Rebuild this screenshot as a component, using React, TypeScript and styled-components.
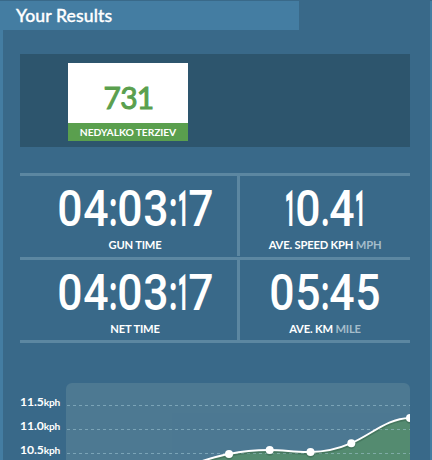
import React from "react";
import styled, { createGlobalStyle } from "styled-components";

const GlobalStyle = createGlobalStyle`
  * {
    box-sizing: border-box;
  }
  body {
    margin: 0;
    background: #396989;
    font-family: Lato, "Open Sans", sans-serif;
    overflow: hidden;
  }
`;

const Page = styled.div`
  height: 460px;
  padding-top: 1px;
  background: #396989;
  overflow: hidden;
`;

const Panel = styled.main`
  height: 459px;
  border-left: 3px solid #447da2;
  border-right: 2px solid #447da2;
  overflow: hidden;
`;

const Title = styled.h1`
  width: 296px;
  height: 29px;
  margin: 0;
  padding-left: 13px;
  background: #447da2;
  color: #fff;
  font-size: 17.6px;
  font-weight: 500;
  line-height: 29px;
  letter-spacing: 0.1px;
  white-space: nowrap;
  -webkit-text-stroke: 0.35px #fff;
`;

const Content = styled.div`
  width: 390px;
  margin: 24px 0 0 17px;
`;

const Runner = styled.section`
  height: 93px;
  padding: 9px 0 0 48px;
  background: #2d556d;
`;

const Bib = styled.div`
  width: 120px;
  background: #fff;
  text-align: center;
`;

const BibNumber = styled.div`
  height: 60px;
  padding-left: 1px;
  color: #5a9f4e;
  font-size: 30px;
  font-weight: 400;
  line-height: 68px;
  letter-spacing: -0.8px;
  -webkit-text-stroke: 1px #5a9f4e;
`;

const BibName = styled.div`
  height: 18px;
  background: #5a9f4e;
  color: #fff;
  font-size: 10.3px;
  font-weight: 700;
  line-height: 19px;
  letter-spacing: -0.1px;
  white-space: nowrap;
`;

const Stats = styled.section`
  display: grid;
  grid-template-columns: 220px 170px;
  grid-template-rows: 84px 83px;
  margin-top: 26px;
  border-bottom: 3px solid #5c87a1;
`;

const StatCell = styled.div<{ $divider?: boolean }>`
  display: grid;
  grid-template-columns: 1fr ${(p) => (p.$divider ? "3px" : "0")};
  border-top: 3px solid #5c87a1;
`;

const Divider = styled.div`
  height: 80px;
  background: #5c87a1;
`;

const StatBody = styled.div<{ $pad?: number }>`
  padding: 14px 0 0 ${(p) => p.$pad || 0}px;
  color: #fff;
  text-align: center;
`;

const Clock = styled.div`
  display: flex;
  justify-content: center;
  height: 36px;
  font-family: Roboto, sans-serif;
  font-size: 50.6px;
  font-weight: 500;
  line-height: 37px;
`;

const Digit = styled.span<{ $width: number; $scale: number; $weight: number }>`
  display: flex;
  justify-content: center;
  width: ${(p) => p.$width}px;
  font-weight: ${(p) => p.$weight};
  transform: scaleX(${(p) => p.$scale});
`;

const StatLabel = styled.div`
  height: 16px;
  margin-top: 11px;
  font-size: 11.2px;
  font-weight: 700;
  line-height: 16px;
  letter-spacing: -0.18px;
  white-space: nowrap;
`;

const Unit = styled.span`
  color: #a5bdcb;
`;

const Chart = styled.section`
  display: flex;
  height: 77px;
  margin-top: 40px;
`;

const Axis = styled.div`
  width: 46px;
  padding-top: 7px;
  color: #fff;
`;

const Tick = styled.div`
  height: 24px;
  font-size: 12.2px;
  font-weight: 700;
  line-height: 24px;
  letter-spacing: -0.1px;
  white-space: nowrap;

  small {
    font-size: 10.2px;
    letter-spacing: -0.2px;
  }
`;

const Plot = styled.svg`
  display: block;
  width: 344px;
  height: 77px;
  border-radius: 6px 6px 0 0;
  background: #4d7992;
`;

type StatProps = {
  value: string;
  label: string;
  unit?: string;
  divider?: boolean;
  pad?: number;
};

// the ones and the punctuation are much narrower than the other digits
const digitStyle = (c: string) => {
  if (c === ":" || c === ".") return { $width: 8.5, $scale: 0.62, $weight: 700 };
  if (c === "1") return { $width: 10, $scale: 0.36, $weight: 900 };
  return { $width: 26, $scale: 0.88, $weight: 500 };
};

const Stat = ({ value, label, unit, divider, pad }: StatProps) => (
  <StatCell $divider={divider}>
    <StatBody $pad={pad}>
      <Clock>
        {value.split("").map((c, i) => (
          <Digit key={i} {...digitStyle(c)}>
            {c}
          </Digit>
        ))}
      </Clock>
      <StatLabel>
        {label}
        {unit && <Unit> {unit}</Unit>}
      </StatLabel>
    </StatBody>
    {divider && <Divider />}
  </StatCell>
);

const ticks = ["11.5", "11.0", "10.5"];

const points = [
  [163, 71],
  [203.7, 67],
  [244.5, 69],
  [285.3, 60.2],
  [344, 35],
];

const curve =
  "M112 85 C130 81 145 74 163 71 C177 68 190 67 203.7 67 C218 67 230 69.5 244.5 69 C259 69 272 66 285.3 60.2 C307 50.5 321 35.5 344 35";

const App = () => (
  <>
    <GlobalStyle />
    <Page>
      <Panel>
        <Title>Your Results</Title>
        <Content>
          <Runner>
            <Bib>
              <BibNumber>731</BibNumber>
              <BibName>NEDYALKO TERZIEV</BibName>
            </Bib>
          </Runner>
          <Stats>
            <Stat value="04:03:17" label="GUN TIME" divider pad={13} />
            <Stat value="10.41" label="AVE. SPEED KPH" unit="MPH" />
            <Stat value="04:03:17" label="NET TIME" divider pad={13} />
            <Stat value="05:45" label="AVE. KM" unit="MILE" />
          </Stats>
          <Chart>
            <Axis>
              {ticks.map((t) => (
                <Tick key={t}>
                  {t}
                  <small>kph</small>
                </Tick>
              ))}
            </Axis>
            <Plot viewBox="0 0 344 77">
              <path d={`${curve} V77 H112 Z`} fill="#548b70" />
              {[22.5, 46.5, 70.5].map((y) => (
                <line
                  key={y}
                  x1="1"
                  x2="344"
                  y1={y}
                  y2={y}
                  stroke="#a9d0dc"
                  strokeOpacity="0.5"
                  strokeDasharray="3 3"
                />
              ))}
              <g transform="translate(0 1.2)" opacity="0.25">
                <path d={curve} fill="none" stroke="#183a2b" strokeWidth="3" />
                {points.map(([x, y]) => (
                  <circle key={x} cx={x} cy={y} r="4.5" fill="#183a2b" />
                ))}
              </g>
              <path d={curve} fill="none" stroke="#fff" strokeWidth="2" />
              {points.map(([x, y]) => (
                <circle key={x} cx={x} cy={y} r="4" fill="#fff" />
              ))}
            </Plot>
          </Chart>
        </Content>
      </Panel>
    </Page>
  </>
);

export default App;
